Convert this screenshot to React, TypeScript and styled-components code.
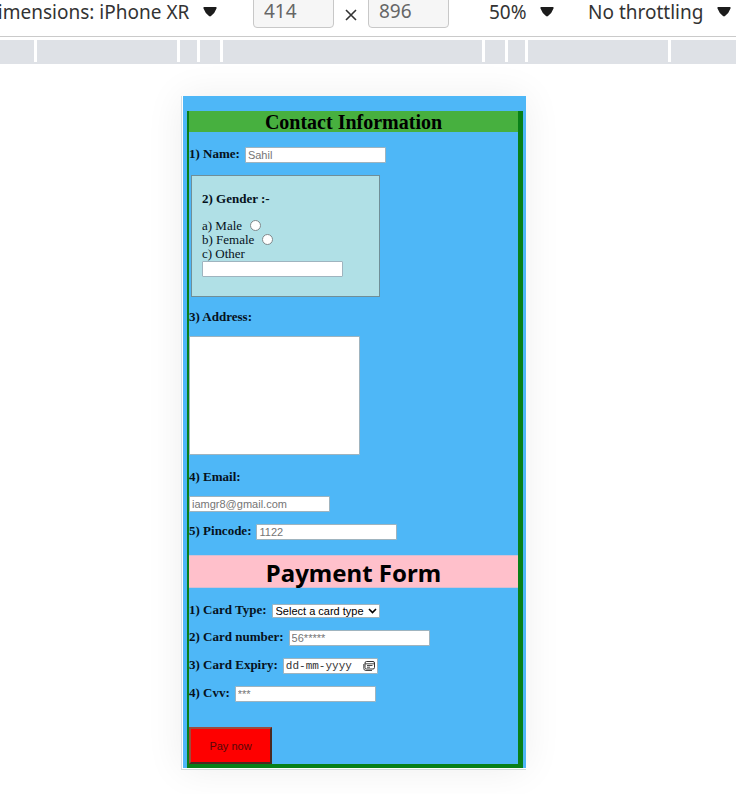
import React from "react";
import styled, { createGlobalStyle } from "styled-components";

const GlobalStyle = createGlobalStyle`
  *, *::before, *::after { box-sizing: border-box; }
  body { margin: 0; background: #fff; }
`;

const sans = `"Liberation Sans", Arial, sans-serif`;
const serif = `"Liberation Serif", "Times New Roman", serif`;
const ui = `"Noto Sans", "Segoe UI", sans-serif`;

const Page = styled.div`
  min-height: 100vh;
  padding-right: 10px;
  overflow: hidden;
`;

const Toolbar = styled.header`
  display: flex;
  align-items: flex-start;
  height: 37px;
  border-bottom: 1px solid #cacaca;
  overflow: hidden;
  font: 19px/24px ${ui};
  color: #333;
`;

const Menu = styled.div<{ $width: number; $gap: number }>`
  display: flex;
  flex: none;
  align-items: center;
  justify-content: flex-end;
  gap: ${(p) => p.$gap}px;
  width: ${(p) => p.$width}px;
  overflow: hidden;
  svg { flex: none; }
`;

const MenuSelect = styled.select`
  appearance: none;
  flex: none;
  height: 24px;
  padding: 0;
  border: 0;
  background: transparent;
  color: inherit;
  font: inherit;
`;

const SizeGroup = styled.div`
  display: flex;
  flex: none;
  margin-left: 36px;
`;

const SizeInput = styled.input`
  flex: none;
  width: 81px;
  height: 32px;
  margin-top: -4px;
  padding: 0 10px 2px;
  border: 1px solid #c8c8c8;
  border-radius: 4px;
  background: #f6f6f6;
  color: #666;
  font: inherit;
`;

const Times = styled.span`
  display: flex;
  justify-content: center;
  flex: none;
  width: 34px;
  padding-top: 9px;
`;

const Ruler = styled.div`
  display: grid;
  grid-template-columns: 34fr 140fr 17fr 20fr 259fr 20fr 17fr 140fr 65fr;
  gap: 3px;
  height: 24px;
  margin-top: 3px;
  border-bottom: 2px solid #dee1e6;
`;

const Mark = styled.div`
  background: #dee1e6;
`;

const Stage = styled.main`
  display: flex;
  justify-content: center;
  padding: 32px 29px 24px 0;
`;

const Device = styled.section`
  width: 100%;
  max-width: 345px;
  border-left: 1px solid #d3dfe4;
  border-bottom: 1px solid #d0dcd8;
  padding: 0 0 1px 1px;
  background: #fff;
  box-shadow: 0 0 36px rgba(0, 0, 0, 0.07);
`;

const Screen = styled.div`
  padding: 15px 3px 0 4px;
  background: #4eb7f7;
`;

const Form = styled.form`
  display: flex;
  flex-direction: column;
  align-items: stretch;
  border: solid #088018;
  border-width: 0 5px 4px 2px;
  font: 13px/14px ${serif};
  color: #06121c;
`;

const Title = styled.h1`
  margin: 0 0 15px;
  padding-top: 1px;
  background: #47b03f;
  color: #000;
  text-align: center;
  font: bold 20px/20px ${serif};
`;

const PayTitle = styled.h2`
  margin: 15px 0;
  padding-top: 2px;
  border: solid #d3bfd4;
  border-width: 1px 0;
  background: #ffc0cb;
  color: #000;
  text-align: center;
  font: bold 24px/29px ${ui};
`;

const Label = styled.label`
  font-weight: bold;
  white-space: nowrap;
`;

const Row = styled.div<{ $after: number }>`
  display: flex;
  align-items: center;
  gap: 5px;
  margin-bottom: ${(p) => p.$after}px;
  ${Label} { padding-bottom: 2px; }
`;

const BlockLabel = styled(Label)`
  display: block;
  margin-bottom: 12px;
`;

const TextInput = styled.input`
  width: 141px;
  height: 16px;
  padding: 0 2px;
  border: 1px solid #9fb4bf;
  border-radius: 1px;
  background: #fff;
  font: 11px/14px ${sans};
  color: #222;
  &::placeholder { color: #757575; opacity: 1; }
`;

const Gender = styled.fieldset`
  width: 189px;
  height: 122px;
  margin: 0 0 13px 2px;
  padding: 16px 10px 0;
  border: 1px solid #6f8f98;
  background: #b0e0e6;
`;

const GenderTitle = styled.div`
  margin-bottom: 13px;
  font-weight: bold;
`;

const Option = styled.label`
  display: flex;
  align-items: center;
  gap: 8px;
  height: 14px;
`;

const Radio = styled.input`
  appearance: none;
  width: 11px;
  height: 11px;
  margin: 0 0 2px;
  border: 1px solid #80898c;
  border-radius: 50%;
  background: #fff;
  &:checked { border: 3px solid #0075ff; }
`;

const Address = styled.textarea`
  width: 171px;
  height: 119px;
  margin-bottom: 15px;
  padding: 2px;
  border: 1px solid #9fb4bf;
  border-radius: 1px;
  background: #fff;
  font: 11px/14px ${sans};
  resize: none;
`;

const SelectBox = styled.div`
  position: relative;
  width: 108px;
`;

const CardSelect = styled.select`
  appearance: none;
  display: block;
  width: 100%;
  height: 14px;
  padding: 0 14px 0 3px;
  border: 1px solid #9fb4bf;
  border-radius: 1px;
  background: #fff;
  color: #000;
  font: 11px/12px ${sans};
`;

const Chevron = styled.svg`
  position: absolute;
  right: 3px;
  top: 4px;
  pointer-events: none;
`;

const DateBox = styled.div`
  display: flex;
  align-items: center;
  width: 95px;
  height: 16px;
  padding: 0 2px;
  border: 1px solid #9fb4bf;
  border-radius: 1px;
  background: #fff;
`;

const DateInput = styled.input`
  flex: 1;
  min-width: 0;
  height: 14px;
  padding: 0;
  border: 0;
  background: transparent;
  font: 11px/14px "Liberation Mono", monospace;
  &::placeholder { color: #333; opacity: 1; }
`;

const PayButton = styled.button`
  width: 83px;
  height: 37px;
  border: 2px solid;
  border-color: #a04a3c #4a2a20 #4a2a20 #a04a3c;
  background: #fe0000;
  color: #560808;
  font: 11px/14px ${sans};
`;

const Arrow = () => (
  <svg width="14" height="10" viewBox="0 0 14 10" aria-hidden="true">
    <path d="M1 0H13Q14 0 13.5 1.5Q12 6 8 9Q7 9.8 6 9Q2 6 .5 1.5Q0 0 1 0Z" fill="#1c1c1c" />
  </svg>
);

export default function App() {
  return (
    <Page>
      <GlobalStyle />
      <Toolbar>
        <Menu $width={217} $gap={13}>
          <MenuSelect aria-label="Device">
            <option>Dimensions: iPhone XR</option>
          </MenuSelect>
          <Arrow />
        </Menu>
        <SizeGroup>
          <SizeInput aria-label="Width" defaultValue="414" />
          <Times>
            <svg width="12" height="12" viewBox="0 0 12 12" role="img" aria-label="by">
              <path d="M1 1L11 11M11 1L1 11" stroke="#333" strokeWidth="1.6" fill="none" />
            </svg>
          </Times>
          <SizeInput aria-label="Height" defaultValue="896" />
        </SizeGroup>
        <Menu $width={105} $gap={13}>
          <MenuSelect aria-label="Zoom">
            <option>50%</option>
          </MenuSelect>
          <Arrow />
        </Menu>
        <Menu $width={177} $gap={13}>
          <MenuSelect aria-label="Throttling">
            <option>No throttling</option>
          </MenuSelect>
          <Arrow />
        </Menu>
      </Toolbar>
      <Ruler>
        {Array.from({ length: 9 }, (_, i) => (
          <Mark key={i} />
        ))}
      </Ruler>
      <Stage>
        <Device>
          <Screen>
            <Form onSubmit={(e) => e.preventDefault()}>
              <Title>Contact Information</Title>
              <Row $after={12}>
                <Label htmlFor="name">1) Name:</Label>
                <TextInput id="name" placeholder="Sahil" />
              </Row>
              <Gender aria-labelledby="gender-title">
                <GenderTitle id="gender-title">2) Gender :-</GenderTitle>
                <Option>
                  a) Male <Radio type="radio" name="gender" />
                </Option>
                <Option>
                  b) Female <Radio type="radio" name="gender" />
                </Option>
                <Option htmlFor="other">c) Other</Option>
                <TextInput id="other" />
              </Gender>
              <BlockLabel htmlFor="address">3) Address:</BlockLabel>
              <Address id="address" />
              <BlockLabel htmlFor="email">4) Email:</BlockLabel>
              <Row $after={12}>
                <TextInput id="email" type="email" placeholder="iamgr8@gmail.com" />
              </Row>
              <Row $after={0}>
                <Label htmlFor="pin">5) Pincode:</Label>
                <TextInput id="pin" placeholder="1122" />
              </Row>
              <PayTitle>Payment Form</PayTitle>
              <Row $after={11}>
                <Label htmlFor="type">1) Card Type:</Label>
                <SelectBox>
                  <CardSelect id="type">
                    <option>Select a card type</option>
                  </CardSelect>
                  <Chevron width="9" height="6" viewBox="0 0 9 6" aria-hidden="true">
                    <path d="M1 1L4.5 4.5L8 1" stroke="#000" strokeWidth="1.6" fill="none" />
                  </Chevron>
                </SelectBox>
              </Row>
              <Row $after={12}>
                <Label htmlFor="number">2) Card number:</Label>
                <TextInput id="number" placeholder="56*****" />
              </Row>
              <Row $after={12}>
                <Label htmlFor="expiry">3) Card Expiry:</Label>
                <DateBox>
                  <DateInput id="expiry" placeholder="dd-mm-yyyy" />
                  <svg width="12" height="10" viewBox="0 0 12 10" aria-hidden="true">
                    <rect x="2" y="0.5" width="9.5" height="7.5" rx="1.5" stroke="#333" fill="none" />
                    <path d="M2 2.8H11.5M4 4.5H9.5M4 6.2H7M.8 3V7.5Q.8 9.5 3 9.5H9" stroke="#333" strokeWidth=".9" fill="none" />
                  </svg>
                </DateBox>
              </Row>
              <Row $after={25}>
                <Label htmlFor="cvv">4) Cvv:</Label>
                <TextInput id="cvv" placeholder="***" />
              </Row>
              <Row $after={0}>
                <PayButton type="submit">Pay now</PayButton>
              </Row>
            </Form>
          </Screen>
        </Device>
      </Stage>
    </Page>
  );
}
